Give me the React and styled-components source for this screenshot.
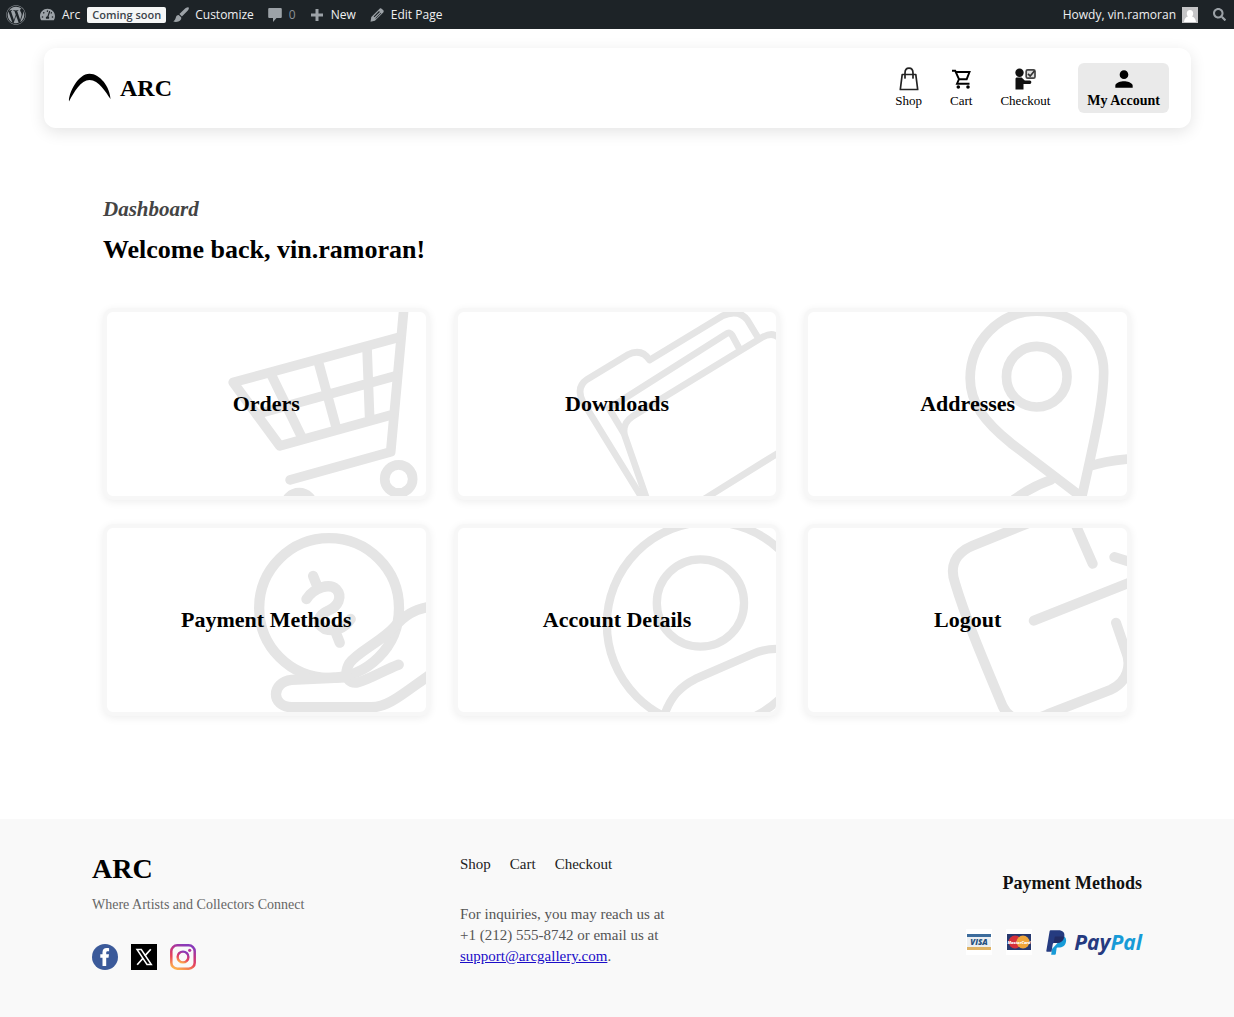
import React from "react";
import styled, { createGlobalStyle } from "styled-components";
import { FaWordpress, FaTachometerAlt, FaSearch } from "react-icons/fa";
import { MdPerson } from "react-icons/md";

const GlobalStyle = createGlobalStyle`
  * { box-sizing: border-box; }
  body {
    margin: 0;
    background: #fff;
    color: #000;
    font-family: "Liberation Serif", "Times New Roman", serif;
  }
  h1, h2, p, ul { margin: 0; padding: 0; }
  ul { list-style: none; }
  a { color: inherit; text-decoration: none; }
  svg { display: block; flex: none; }
`;

/* ---------- admin bar ---------- */

const AdminBar = styled.nav`
  display: flex;
  align-items: center;
  justify-content: space-between;
  height: 29px;
  padding: 0 8px 0 6px;
  background: #1d2327;
  color: #f0f0f1;
  font: 12px/29px "Open Sans", "Noto Sans", sans-serif;
`;

const AdminGroup = styled.div`
  display: flex;
  align-items: center;
  gap: ${(p) => p.$gap}px;
`;

const AdminItem = styled.a`
  display: flex;
  align-items: center;
  gap: ${(p) => p.$gap || 7}px;
  color: ${(p) => (p.$muted ? "#8c9196" : "#f0f0f1")};
  white-space: nowrap;
  svg { color: #9ca2a7; }
`;

const Badge = styled.span`
  padding: 0 5px;
  border-radius: 2px;
  background: #f6f7f7;
  color: #3c434a;
  font-size: 11px;
  font-weight: 600;
  line-height: 16px;
  white-space: nowrap;
`;

const SearchButton = styled.button`
  display: flex;
  padding: 0;
  border: 0;
  background: none;
  color: #9ca2a7;
`;

/* ---------- site header ---------- */

const HeaderCard = styled.header`
  display: flex;
  align-items: center;
  justify-content: space-between;
  height: 80px;
  margin: 19px 43px 0 44px;
  padding: 0 22px 0 24px;
  border-radius: 12px;
  background: #fff;
  box-shadow: 0 4px 16px rgba(0, 0, 0, 0.11);
`;

const Brand = styled.a`
  display: flex;
  align-items: center;
  gap: 8px;
  font-size: 24px;
  font-weight: 700;
  line-height: 30px;
`;

const NavList = styled.ul`
  display: flex;
  align-items: center;
  gap: 28px;
`;

const NavLink = styled.a`
  display: flex;
  flex-direction: column;
  align-items: center;
  gap: 2px;
  padding: ${(p) => (p.$active ? "5px 9px 4px" : "5px 0 4px")};
  border-radius: 6px;
  background: ${(p) => (p.$active ? "#eaeaea" : "none")};
  font-size: ${(p) => (p.$active ? 14 : 13)}px;
  font-weight: ${(p) => (p.$active ? 700 : 400)};
  line-height: 17px;
`;

const NavIcon = styled.span`
  display: flex;
  align-items: center;
  height: 22px;
`;

/* ---------- dashboard ---------- */

const Main = styled.main`
  max-width: 1028px;
  margin: 0 auto;
  padding: 68px 0 103px;
`;

const Eyebrow = styled.p`
  color: #444;
  font-size: 21px;
  font-style: italic;
  font-weight: 700;
  line-height: 26px;
`;

const Welcome = styled.h1`
  margin-top: 12px;
  font-size: 26px;
  line-height: 32px;
`;

const CardGrid = styled.div`
  display: grid;
  grid-template-columns: repeat(3, 1fr);
  gap: 24px;
  margin-top: 42px;
`;

const Card = styled.a`
  position: relative;
  display: flex;
  align-items: center;
  justify-content: center;
  height: 192px;
  overflow: hidden;
  border: 4px solid #f7f7f7;
  border-radius: 10px;
  background: #fff;
  box-shadow: 0 2px 8px rgba(0, 0, 0, 0.07);
  font-size: 22px;
  font-weight: 700;
`;

const CardArt = styled.svg`
  position: absolute;
  inset: 0;
  width: 100%;
  height: 100%;
  border-radius: 6px;
  fill: none;
  stroke: #e5e5e5;
  stroke-linecap: round;
  stroke-linejoin: round;
`;

const CardTitle = styled.span`
  position: relative;
`;

/* ---------- footer ---------- */

const Footer = styled.footer`
  padding: 34px 24px 47px;
  background: #f9f9f9;
`;

const FooterInner = styled.div`
  display: grid;
  grid-template-columns: repeat(3, 1fr);
  gap: 54px;
  max-width: 1050px;
  margin: 0 auto;
`;

const FooterBrand = styled.h2`
  font-size: 28px;
  line-height: 32px;
`;

const Tagline = styled.p`
  margin-top: 10px;
  color: #666;
  font-size: 14px;
  line-height: 20px;
`;

const SocialRow = styled.div`
  display: flex;
  gap: 13px;
  margin-top: 29px;
`;

const FooterNav = styled.nav`
  display: flex;
  gap: 19px;
  color: #222;
  font-size: 15px;
  line-height: 22px;
`;

const Contact = styled.p`
  max-width: 210px;
  margin-top: 29px;
  color: #555;
  font-size: 15px;
  line-height: 21px;
  a { color: #1a0dc8; text-decoration: underline; }
`;

const Payments = styled.div`
  display: flex;
  flex-direction: column;
  align-items: flex-end;
  padding-top: 18px;
`;

const PaymentsTitle = styled.h2`
  color: #111;
  font-size: 18px;
  line-height: 24px;
`;

const PaymentRow = styled.div`
  display: flex;
  align-items: center;
  gap: 14px;
  margin-top: 34px;
`;

const PayPalMark = styled.span`
  display: flex;
  align-items: center;
  gap: 7px;
  color: #253b80;
  font: italic 700 21px/26px "Open Sans", sans-serif;
  em { color: #179bd7; }
`;

/* ---------- drawings ---------- */

const BrushIcon = () => (
  <svg width="16" height="16" viewBox="0 0 16 16" fill="currentColor">
    <path d="M15.6.4c-.8-.7-2.600.1-4 1.500L6.400 7l2.500 2.500 5.200-5.200C15.500 2.800 16.300 1.200 15.600.4zM5.700 7.900c-1.500 0-2.400.9-2.700 2.200C2.500 11.800 2 13.500.3 14.500c2.300.9 5.500.5 7-1.200 1-1.100 1.200-2 .8-3.100z" />
  </svg>
);

const CommentIcon = () => (
  <svg width="14" height="16" viewBox="0 0 14 16" fill="currentColor">
    <path d="M1.500 1h11c.8 0 1.300.5 1.300 1.300v7.400c0 .8-.5 1.300-1.300 1.300H8.500L5 15v-4H1.500C.7 11 .2 10.500.2 9.700V2.300C.2 1.500.7 1 1.500 1z" />
  </svg>
);

const PlusIcon = () => (
  <svg width="14" height="14" viewBox="0 0 14 14" fill="currentColor">
    <path d="M5.500 1h3v4.500H13v3H8.500V13h-3V8.500H1v-3h4.500z" />
  </svg>
);

const PencilIcon = () => (
  <svg width="14" height="14" viewBox="0 0 14 14" fill="currentColor">
    <path fillRule="evenodd" d="M9.600.7c.7-.7 1.600-.5 2.300.2l1.200 1.200c.7.7.9 1.600.2 2.300L4.900 12.800.5 13.700l.8-4.600zM9 3 3.600 8.500l.8.8L9.900 3.900zM10.800 4.800 5.300 10.200l.5.600 5.500-5.500z" />
  </svg>
);

const Avatar = () => (
  <svg width="16" height="16" viewBox="0 0 16 16" role="img" aria-label="vin.ramoran">
    <rect width="16" height="16" fill="#c5c5c7" />
    <path d="M8 3c2 0 3.200 1.400 3.200 3.400 0 1.200-.5 2.300-1.200 3 2 .6 3.600 2 4 5.600H2c.4-3.600 2-5 4-5.600-.7-.7-1.200-1.800-1.200-3C4.800 4.400 6 3 8 3z" fill="#fff" />
  </svg>
);

const ArcLogo = () => (
  <svg width="44" height="30" viewBox="0 0 44 30">
    <path d="M1 28.500C.5 20 10 .8 21.500.8 32 .8 42 14 42.500 26 37.500 19 31 7 21.500 7 13 7 6 19 1 28.500z" fill="#000" />
  </svg>
);

const BagIcon = () => (
  <svg width="20" height="24" viewBox="0 0 20 24" fill="none" stroke="#222" strokeWidth="1.700" strokeLinejoin="round">
    <path d="M3.200 7.500h13.600L18.700 22.500H1.300z" />
    <path d="M6 11V6C6 3 7.500 1.200 10 1.200S14 3 14 6v5" strokeLinecap="round" />
  </svg>
);

const CartIcon = () => (
  <svg width="22" height="22" viewBox="0 0 22 22" fill="none" stroke="#000" strokeWidth="1.900">
    <path d="M2 2.800h3.200L9 11.200h7.700L19.500 4H5.800M9 11.200 7 15.700h12.500" />
    <circle cx="8.300" cy="19" r="1.800" fill="#000" stroke="none" />
    <circle cx="18" cy="19" r="1.800" fill="#000" stroke="none" />
  </svg>
);

const CheckoutIcon = () => (
  <svg width="22" height="22" viewBox="0 0 22 22">
    <circle cx="5.500" cy="4.800" r="4.200" fill="#111" />
    <path d="M1.500 11c0-1 .6-1.500 1.500-1.500h4.600l3.200 3h5c2 0 2 3.400 0 3.400H9.500V21.500h-8z" fill="#111" />
    <rect x="12.200" y="1.800" width="8.800" height="8.400" rx="1.500" fill="#ddd" stroke="#444" strokeWidth="1.700" />
    <path d="m14 5.800 2.200 2.200 4.400-5.200" fill="none" stroke="#333" strokeWidth="1.700" />
  </svg>
);

const FacebookLogo = () => (
  <svg width="26" height="26" viewBox="0 0 26 26">
    <circle cx="13" cy="13" r="13" fill="#3b5a9a" />
    <path d="M10.500 22v-8.200H8.300v-3.500h2.200V8.300c0-2.700 1.600-4.200 4.200-4.200 1.100 0 2.400.2 2.400.2v3h-1.400c-1.200 0-1.500.7-1.500 1.500v1.500h2.800l-.5 3.500h-2.300V22z" fill="#fff" />
  </svg>
);

const XLogo = () => (
  <svg width="26" height="26" viewBox="0 0 26 26">
    <rect width="26" height="26" fill="#000" />
    <path d="M6 5.500h4.300l10 15H16z" fill="none" stroke="#fff" strokeWidth="1.500" />
    <path d="m19.800 5.200-6 6.700M12 14.200l-5.800 6.600" stroke="#fff" strokeWidth="1.700" />
  </svg>
);

const InstagramLogo = () => (
  <svg width="26" height="26" viewBox="0 0 26 26" fill="none">
    <defs>
      <linearGradient id="insta" x1="0.200" y1="1" x2="0.600" y2="0">
        <stop offset="0" stopColor="#fdb04b" />
        <stop offset="0.400" stopColor="#e8455a" />
        <stop offset="0.700" stopColor="#c13584" />
        <stop offset="1" stopColor="#8a3ab9" />
      </linearGradient>
    </defs>
    <rect x="1.300" y="1.300" width="23.400" height="23.400" rx="6" stroke="url(#insta)" strokeWidth="2.500" />
    <circle cx="13" cy="13" r="5.400" stroke="url(#insta)" strokeWidth="2.400" />
    <circle cx="19.700" cy="6.300" r="1.600" fill="#b5359c" />
  </svg>
);

const VisaLogo = () => (
  <svg width="26" height="26" viewBox="0 0 26 26" role="img" aria-label="Visa">
    <rect width="26" height="26" fill="#fff" />
    <rect x="1" y="5" width="24" height="16" fill="#eceff2" />
    <rect x="1" y="5" width="24" height="3" fill="#3c6c9c" />
    <rect x="1" y="18" width="24" height="3" fill="#dfb263" />
    <text x="13" y="16" textAnchor="middle" fontFamily="Open Sans, sans-serif" fontSize="8" fontWeight="800" fontStyle="italic" fill="#27527f">VISA</text>
  </svg>
);

const MastercardLogo = () => (
  <svg width="26" height="26" viewBox="0 0 26 26" role="img" aria-label="MasterCard">
    <rect width="26" height="26" fill="#fff" />
    <rect x="1" y="5" width="24" height="16" fill="#27396f" />
    <circle cx="9" cy="13" r="6.500" fill="#d5303a" />
    <circle cx="17" cy="13" r="6.500" fill="#f0a63a" />
    <text x="13" y="15" textAnchor="middle" fontFamily="Open Sans, sans-serif" fontSize="4" fontWeight="800" fontStyle="italic" fill="#fff">MasterCard</text>
  </svg>
);

const PayPalSymbol = () => (
  <svg width="21" height="25" viewBox="0 0 21 25">
    <path d="M17.800 6.200c2 1.200 2.700 3.200 2.200 5.600-.8 4.200-3.600 5.700-7.300 5.700h-1.200c-.5 0-.8.400-.9.800L9.800 24c-.1.500-.4.700-.9.700H5.200L6 19z" fill="#179bd7" />
    <path d="M3.600 1.200C3.700.6 4.100.2 4.700.2h7.500c4.600 0 6.900 2.300 6.100 6.500-.8 4.500-3.800 6.300-8 6.300H7.900c-.6 0-1 .4-1.100 1L5.500 21.800H.9c-.4 0-.6-.3-.6-.7z" fill="#253b80" />
    <path d="M8.600 7.400c.1-.5.400-.8.900-.8h5.700c1 0 1.900.1 2.700.5-.9 4.200-3.700 5.900-7.600 5.900H7.700z" fill="#222d65" />
  </svg>
);

const cards = [
  {
    title: "Orders",
    box: "36 36 957 552",
    weight: 29,
    art: (
      <>
        <path d="M928 20 888 456 586 540" />
        <path d="M912 112 415 247 555 438 885 346M505 337 900 228M530 225l90 185M672 190l53 195M817 145l8 215" />
        <circle cx="912" cy="537" r="42" />
        <circle cx="613" cy="620" r="42" />
      </>
    ),
  },
  {
    title: "Downloads",
    box: "37 36 957 552",
    weight: 20,
    art: (
      <>
        <path d="M590 595 412 305Q390 262 425 238L545 165Q588 143 612 180L830 48Q880 25 906 60L935 108" />
        <path d="M535 400 490 325 843 101Q853 94 860 105L883 148" />
        <path d="M605 600 537 405Q530 370 560 350L950 112Q985 92 1005 118M780 595 1005 455" />
      </>
    ),
  },
  {
    title: "Addresses",
    box: "40 36 957 552",
    weight: 29,
    art: (
      <>
        <path d="M857 588 650 430C570 365 527 310 527 235A200 202 0 0 1 727 33C845 33 928 120 928 215C928 290 912 370 862 592" />
        <circle cx="727" cy="230" r="91" />
        <path d="M885 499Q930 484 1005 477M770 540Q715 558 660 598" />
      </>
    ),
  },
  {
    title: "Payment Methods",
    box: "36 39 957 552",
    weight: 31,
    art: (
      <>
        <circle cx="703" cy="279" r="210" />
        <path d="M655 183l13 32M635 252C660 215 705 205 724 222C745 245 730 275 700 287C670 300 660 325 690 342C720 352 750 340 768 312M722 350l13 33" />
        <path d="M1005 276C960 282 930 300 900 335C860 380 790 410 764 445C745 480 760 510 790 502C820 495 870 465 912 449" />
        <path d="M752 487 590 495C528 502 528 575 590 577H830C880 577 920 540 1005 480" />
      </>
    ),
  },
  {
    title: "Account Details",
    box: "37 39 957 552",
    weight: 25,
    art: (
      <>
        <circle cx="792" cy="328" r="308" />
        <circle cx="765" cy="264" r="131" />
        <path d="M655 605C675 545 705 515 750 492L920 418Q960 400 1005 402" />
      </>
    ),
  },
  {
    title: "Logout",
    box: "40 39 957 552",
    weight: 30,
    art: (
      <>
        <path d="M700 25 535 92C480 115 464 155 482 205C510 300 560 420 625 575C650 625 700 625 760 598L950 524C1000 500 1012 450 995 410L965 323" />
        <path d="M842 25 895 146M718 317 1005 203M960 126 1005 140" />
      </>
    ),
  },
];

export default function App() {
  return (
    <>
      <GlobalStyle />
      <AdminBar aria-label="Toolbar">
        <AdminGroup $gap={14}>
          <AdminItem href="#" aria-label="About WordPress"><FaWordpress size={20} /></AdminItem>
          <AdminGroup $gap={7}>
            <AdminItem href="#"><FaTachometerAlt size={15} />Arc</AdminItem>
            <Badge>Coming soon</Badge>
            <AdminItem href="#" $gap={6}><BrushIcon />Customize</AdminItem>
          </AdminGroup>
          <AdminItem href="#" $muted><CommentIcon />0</AdminItem>
          <AdminItem href="#"><PlusIcon />New</AdminItem>
          <AdminItem href="#"><PencilIcon />Edit Page</AdminItem>
        </AdminGroup>
        <AdminGroup $gap={15}>
          <AdminItem href="#" $gap={6}>Howdy, vin.ramoran<Avatar /></AdminItem>
          <SearchButton type="button" aria-label="Search"><FaSearch size={13} /></SearchButton>
        </AdminGroup>
      </AdminBar>

      <HeaderCard>
        <Brand href="#"><ArcLogo />ARC</Brand>
        <nav aria-label="Main">
          <NavList>
            <li><NavLink href="#"><NavIcon><BagIcon /></NavIcon>Shop</NavLink></li>
            <li><NavLink href="#"><NavIcon><CartIcon /></NavIcon>Cart</NavLink></li>
            <li><NavLink href="#"><NavIcon><CheckoutIcon /></NavIcon>Checkout</NavLink></li>
            <li><NavLink href="#" $active><NavIcon><MdPerson size={26} /></NavIcon>My Account</NavLink></li>
          </NavList>
        </nav>
      </HeaderCard>

      <Main>
        <Eyebrow>Dashboard</Eyebrow>
        <Welcome>Welcome back, vin.ramoran!</Welcome>
        <CardGrid>
          {cards.map((c) => (
            <Card href="#" key={c.title}>
              <CardArt viewBox={c.box} preserveAspectRatio="xMaxYMid meet" strokeWidth={c.weight} aria-hidden="true">
                {c.art}
              </CardArt>
              <CardTitle>{c.title}</CardTitle>
            </Card>
          ))}
        </CardGrid>
      </Main>

      <Footer>
        <FooterInner>
          <div>
            <FooterBrand>ARC</FooterBrand>
            <Tagline>Where Artists and Collectors Connect</Tagline>
            <SocialRow>
              <a href="#" aria-label="Facebook"><FacebookLogo /></a>
              <a href="#" aria-label="X"><XLogo /></a>
              <a href="#" aria-label="Instagram"><InstagramLogo /></a>
            </SocialRow>
          </div>
          <div>
            <FooterNav aria-label="Footer">
              <a href="#">Shop</a>
              <a href="#">Cart</a>
              <a href="#">Checkout</a>
            </FooterNav>
            <Contact>
              For inquiries, you may reach us at +1 (212) 555-8742 or email us at{" "}
              <a href="#">support@arcgallery.com</a>.
            </Contact>
          </div>
          <Payments>
            <PaymentsTitle>Payment Methods</PaymentsTitle>
            <PaymentRow>
              <VisaLogo />
              <MastercardLogo />
              <PayPalMark>
                <PayPalSymbol />
                <span>Pay<em>Pal</em></span>
              </PayPalMark>
            </PaymentRow>
          </Payments>
        </FooterInner>
      </Footer>
    </>
  );
}
